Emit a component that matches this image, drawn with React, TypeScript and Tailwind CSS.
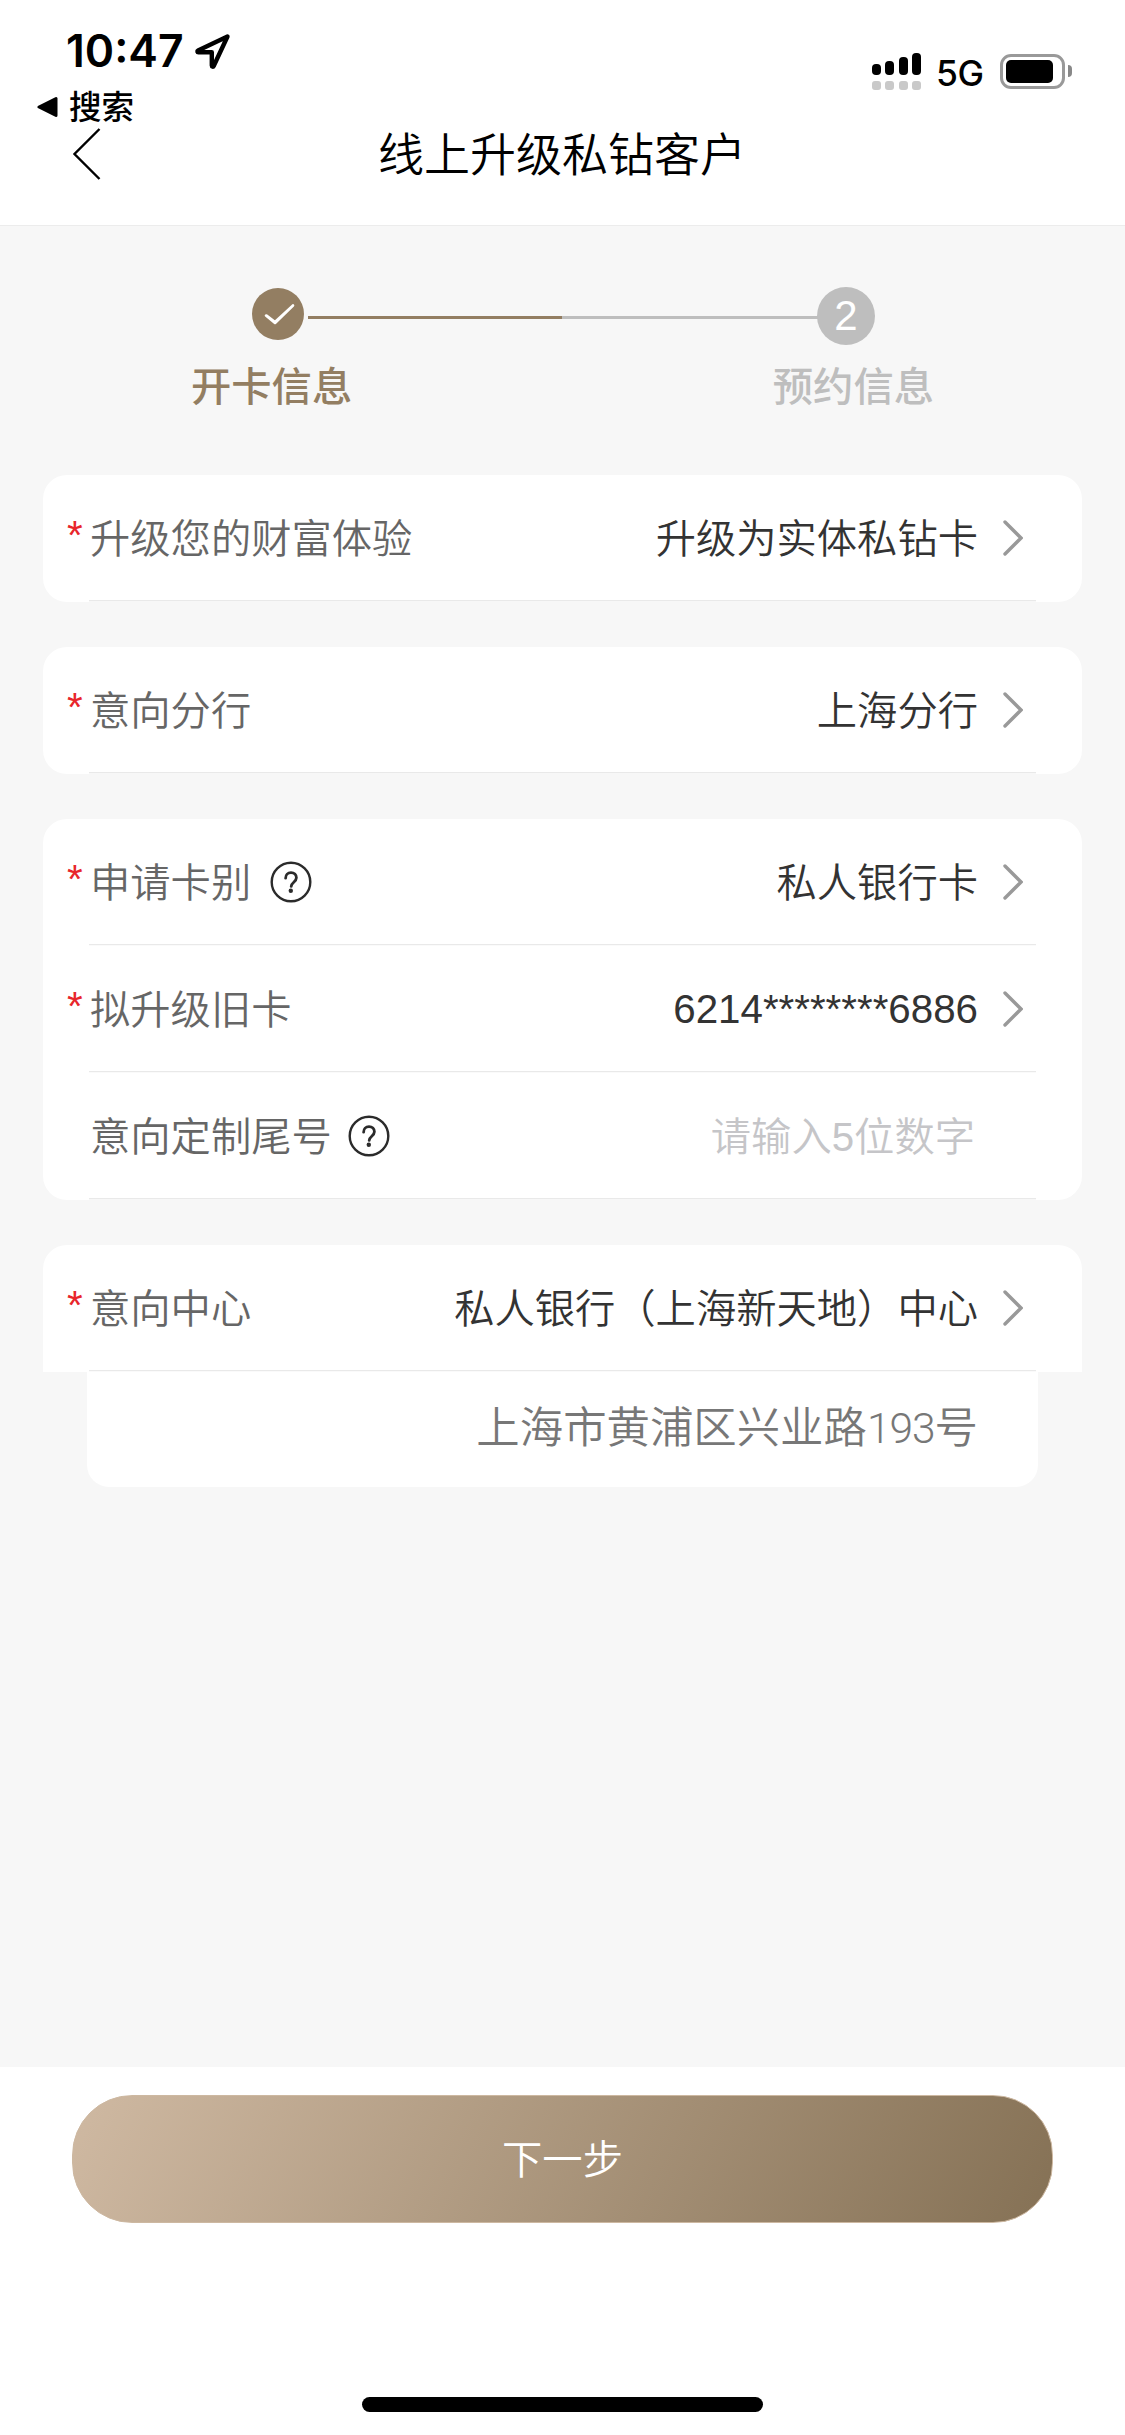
import type { ReactNode } from 'react';

const BackIcon = () => (
  <svg width="30" height="54" viewBox="0 0 30 54" fill="none">
    <path d="M28.500 2 3.500 27l25 25" stroke="#000" strokeWidth="2.400" />
  </svg>
);

const ArrowIcon = () => (
  <svg width="20" height="36" viewBox="0 0 20 36" fill="none" className="mr-[59px] shrink-0">
    <path d="m2 2 16 16L2 34" stroke="#999" strokeWidth="3.400" strokeLinecap="round" />
  </svg>
);

const HelpIcon = () => (
  <svg width="42" height="42" viewBox="0 0 42 42" fill="none">
    <circle cx="21" cy="21" r="19.300" stroke="#2b2b2b" strokeWidth="2.400" />
    <path
      d="M15.600 17.200c0-3.400 2.200-5.600 5.400-5.600s5.400 2.200 5.400 5.200c0 4.200-5.200 4.600-5.200 8.600"
      stroke="#2b2b2b"
      strokeWidth="2.800"
      strokeLinecap="round"
    />
    <circle cx="20.800" cy="29.800" r="2.200" fill="#2b2b2b" />
  </svg>
);

const StatusBar = () => {
  const bars = ['h-[11px]', 'h-[14px]', 'h-[18px]', 'h-[22px]'];

  return (
    <div className="flex justify-between h-[124px]">
      <div className="pt-[31px] pl-[37px]">
        <div className="flex items-center h-10 pl-[29px]">
          <span className="font-['Inter'] text-[44.500px] font-semibold leading-none">10:47</span>
          <svg width="38" height="38" viewBox="0 0 38 38" fill="none" className="ml-[10px]">
            <path
              d="M33.500 4.500 4 18.600c-1 .5-.7 1.700.4 1.700h13.400v13.300c0 1.200 1.400 1.500 1.900.4z"
              stroke="#000"
              strokeWidth="4.400"
              strokeLinejoin="round"
            />
          </svg>
        </div>
        <div className="flex items-center h-10 mt-[16px]">
          <svg width="21" height="22" viewBox="0 0 21 22">
            <path d="M2 11 19 2.500v17z" stroke="#000" strokeWidth="3" strokeLinejoin="round" />
          </svg>
          <span className="ml-[11px] pt-[2px] text-[32.500px] font-medium leading-none">搜索</span>
        </div>
      </div>

      <div className="flex pt-[53px] pr-[53px]">
        <div className="flex items-end gap-[4.500px] h-[37px]">
          {bars.map((height) => (
            <div key={height} className="flex flex-col gap-[6px]">
              <div className={`w-[9px] rounded-[4px] bg-black ${height}`}></div>
              <div className="w-[9px] h-[9px] rounded-[3px] bg-[#c9c9c9]"></div>
            </div>
          ))}
        </div>
        <span className="ml-[15px] mt-[3px] w-[50px] font-['Inter'] text-[35.500px] font-medium tracking-[-0.5px] leading-none">5G</span>
        <div className="flex items-center ml-[14px] mt-[1px] w-[65px] h-[35px] rounded-[11px] border-[3px] border-[#999] pl-[3px]">
          <div className="w-[47px] h-[23px] rounded-[5px] bg-black"></div>
        </div>
        <div className="ml-[3px] mt-[12px] w-[4px] h-[12px] rounded-r-full bg-[#888]"></div>
      </div>
    </div>
  );
};

const Steps = () => (
  <div className="h-[249px] pt-[61px]">
    <div className="flex items-start h-[59px] pl-[252px]">
      <svg width="52" height="52" viewBox="0 0 52 52" fill="none" className="mt-px">
        <circle cx="26" cy="26" r="26" fill="#937e62" />
        <path d="m14.500 27.500 8.500 6.500L41 17.500l-18 17.500-9-7.500z" fill="#fff" stroke="#fff" strokeWidth="2.600" strokeLinejoin="round" />
      </svg>
      <div className="ml-1 mt-[29px] w-[254px] h-[3px] bg-[#937e62]"></div>
      <div className="mt-[29px] w-[256px] h-[3px] bg-[#bebebe]"></div>
      <div className="-ml-px flex items-center justify-center w-[58px] h-[58px] rounded-full bg-[#bebebe] text-white text-[42px] leading-none">
        2
      </div>
    </div>
    <div className="flex justify-between mt-[22px] pl-[191px] pr-[191px] text-[40.300px] font-medium leading-none">
      <span className="text-[#937e62]">开卡信息</span>
      <span className="text-[#bebebe]">预约信息</span>
    </div>
  </div>
);

type RowProps = {
  label: string;
  required?: boolean;
  help?: string;
  last?: boolean;
  children: ReactNode;
};

const Row = ({ label, required, help, last, children }: RowProps) => (
  <div className="h-[127px]">
    <div className="flex items-center h-[125px] pt-[2px] text-[40.300px] leading-none text-[#333]">
      <span className="w-[47px] pb-[4px] pl-[24px] text-[#e8262b]">{required && '*'}</span>
      <span className="pt-[3px] text-[#666]">{label}</span>
      {help && <button className={help}><HelpIcon /></button>}
      <div className="flex flex-1 items-center justify-end gap-[25px]">{children}</div>
    </div>
    <div className={`ml-[46px] mr-[46px] h-[2px] border-t border-[#e9e9e9] ${last ? 'bg-[#f7f7f7]' : 'bg-[#fafafa]'}`}></div>
  </div>
);

const Card = ({ children }: { children: ReactNode }) => (
  <div className="rounded-[24px] bg-white">{children}</div>
);

export default function App() {
  return (
    <div className="flex flex-col w-[1125px] h-[2435px] bg-[#f7f7f7] font-['Liberation_Sans','Noto_Sans_CJK_SC',sans-serif] font-[350] text-black">
      {/* Header */}
      <header className="h-[226px] border-b border-[#ececec] bg-white">
        <StatusBar />
        <div className="flex items-center h-[60px] pl-[71px]">
          <BackIcon />
          <h1 className="ml-[277px] pt-[2px] text-[46px] font-[350] leading-none">线上升级私钻客户</h1>
        </div>
      </header>

      <Steps />

      {/* Form */}
      <main className="flex flex-col flex-1 gap-[45px] px-[43px]">
        <Card>
          <Row label="升级您的财富体验" required last>
            <span className="pt-[3px]">升级为实体私钻卡</span>
            <ArrowIcon />
          </Row>
        </Card>

        <Card>
          <Row label="意向分行" required last>
            <span className="pt-[3px]">上海分行</span>
            <ArrowIcon />
          </Row>
        </Card>

        <Card>
          <Row label="申请卡别" required help="ml-[19px] mb-[2px]">
            <span className="pt-[3px]">私人银行卡</span>
            <ArrowIcon />
          </Row>
          <Row label="拟升级旧卡" required>
            <span className="pt-[1px]">6214********6886</span>
            <ArrowIcon />
          </Row>
          <Row label="意向定制尾号" help="ml-[16px] mb-[2px]" last>
            <span className="mr-[107px] pt-[3px] text-[#c5c5c8]">请输入5位数字</span>
          </Row>
        </Card>

        <div>
          <div className="rounded-t-[24px] bg-white">
            <Row label="意向中心" required>
              <span className="pt-[3px]">私人银行（上海新天地）中心</span>
              <ArrowIcon />
            </Row>
          </div>
          <div className="flex items-center justify-end mx-[44px] h-[115px] pb-[5px] pr-[60px] rounded-b-[22px] bg-white font-['Noto_Sans_CJK_SC',sans-serif] text-[43.400px] leading-none text-[#777]">
            <p>
              上海市黄浦区兴业路
              <span className="font-['Roboto'] text-[42.500px] font-light tracking-[-1px]">193</span>
              号
            </p>
          </div>
        </div>
      </main>

      {/* Bottom action */}
      <footer className="flex flex-col items-center h-[368px] pt-[28px] bg-white">
        <button className="w-[981px] h-[128px] pt-[5px] rounded-[60px] border border-[#cdb8a1] bg-linear-[115deg,#cfb9a2,#857155] text-[40.300px] leading-none text-white">
          下一步
        </button>
        <div className="mt-[174px] w-[401px] h-[15px] rounded-full bg-black"></div>
      </footer>
    </div>
  );
}
